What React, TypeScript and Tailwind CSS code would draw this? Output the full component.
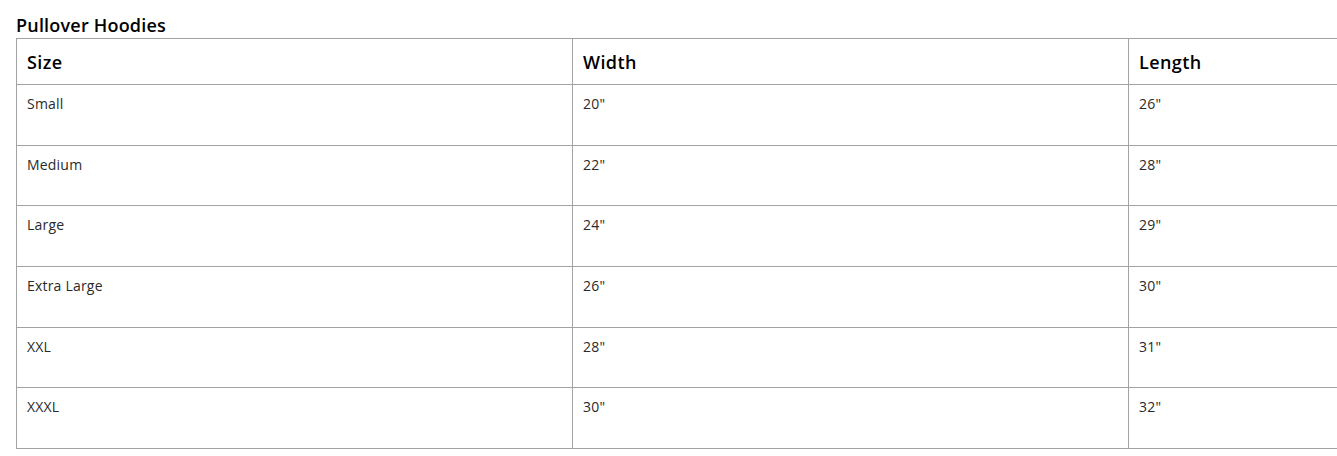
const rows = [
  ["Small", '20"', '26"'],
  ["Medium", '22"', '28"'],
  ["Large", '24"', '29"'],
  ["Extra Large", '26"', '30"'],
  ["XXL", '28"', '31"'],
  ["XXXL", '30"', '32"'],
];

export default function App() {
  return (
    <div className="w-[1337px] h-[456px] overflow-hidden bg-white text-black font-['Open_Sans',sans-serif]">
      <div className="pl-4 pt-[13px]">
        <h2 className="text-[18px] leading-[25px] font-semibold tracking-[0.2px]">Pullover Hoodies</h2>
        <table className="border-collapse table-fixed w-[1668px]">
          <colgroup>
            <col className="w-[556px]" />
            <col className="w-[556px]" />
            <col className="w-[556px]" />
          </colgroup>
          <thead>
            <tr className="h-[46px]">
              {["Size", "Width", "Length"].map((h) => (
                <th
                  key={h}
                  className="border border-[#a3a3a3] px-[10px] text-left align-middle text-[18px] font-semibold tracking-[0.4px] pt-[1px]"
                >
                  {h}
                </th>
              ))}
            </tr>
          </thead>
          <tbody>
            {rows.map((r) => (
              <tr key={r[0]} className="h-[60.67px]">
                {r.map((c, i) => (
                  <td
                    key={i}
                    className="border border-[#a3a3a3] px-[10px] pt-[9px] align-top text-[14px] tracking-[0.2px] leading-5 text-[#2a2a2a]"
                  >
                    {c}
                  </td>
                ))}
              </tr>
            ))}
          </tbody>
        </table>
      </div>
    </div>
  );
}
